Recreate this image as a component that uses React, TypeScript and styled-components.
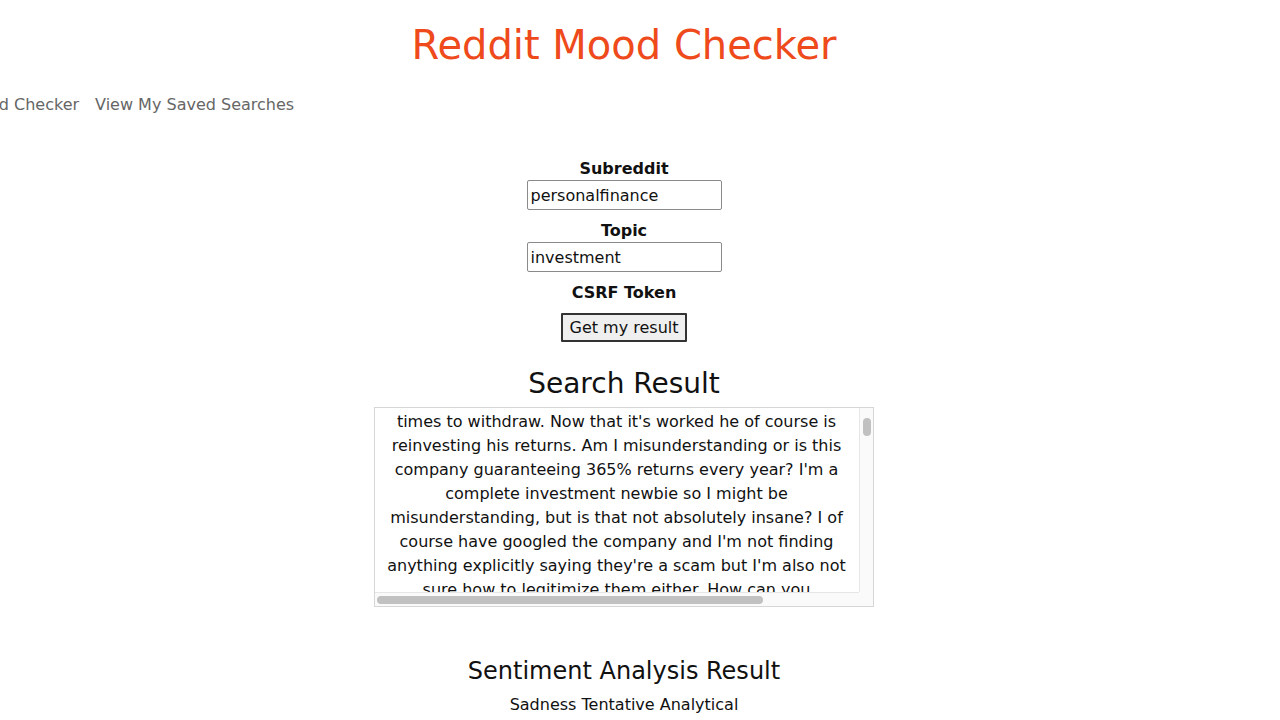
import styled, { createGlobalStyle } from "styled-components";

const GlobalStyle = createGlobalStyle`
  body {
    margin: 0;
    background: #fff;
    font-family: "DejaVu Sans", Verdana, sans-serif;
    color: #111;
    overflow: hidden;
  }
`;

const postText =
  "times to withdraw. Now that it's worked he of course is reinvesting his returns. Am I misunderstanding or is this company guaranteeing 365% returns every year? I'm a complete investment newbie so I might be misunderstanding, but is that not absolutely insane? I of course have googled the company and I'm not finding anything explicitly saying they're a scam but I'm also not sure how to legitimize them either. How can you realistically verify whether an investment platform is real? He keeps telling me to put money in too and the site looks fine but I'm not sure. Any advice would be appreciated, thanks in advance.";

export default function App() {
  return (
    <Page>
      <GlobalStyle />
      <Title>Reddit Mood Checker</Title>
      <Nav>
        <NavLink href="#">Reddit Mood Checker</NavLink>
        <NavLink href="#">View My Saved Searches</NavLink>
      </Nav>

      <Form onSubmit={(e) => e.preventDefault()}>
        <Label>Subreddit</Label>
        <Input defaultValue="personalfinance" />
        <Label $top={11}>Topic</Label>
        <Input defaultValue="investment" />
        <Label $top={11}>CSRF Token</Label>
        <Button type="submit">Get my result</Button>
      </Form>

      <SectionHeading $size={28} $top={25}>Search Result</SectionHeading>
      <ResultBox>
        <ResultViewport>
          <ResultText>{postText}</ResultText>
        </ResultViewport>
        <VTrack>
          <VThumb />
        </VTrack>
        <HTrack>
          <HThumb />
        </HTrack>
        <Corner />
      </ResultBox>

      <SectionHeading $size={24} $top={50}>Sentiment Analysis Result</SectionHeading>
      <Moods>Sadness Tentative Analytical</Moods>
    </Page>
  );
}

const Page = styled.div`
  display: flex;
  flex-direction: column;
  align-items: center;
  width: 1248px;
  height: 720px;
`;

const Title = styled.h1`
  margin: 21px 0 0;
  font-size: 40px;
  line-height: 48px;
  font-weight: normal;
  color: #ee4a1c;
`;

const Nav = styled.nav`
  align-self: flex-start;
  display: flex;
  gap: 16px;
  margin: 26px 0 0 -91px;
`;

const NavLink = styled.a`
  font-size: 16px;
  line-height: 20px;
  color: #666;
  text-decoration: none;
  white-space: nowrap;
`;

const Form = styled.form`
  display: flex;
  flex-direction: column;
  align-items: center;
  margin-top: 44px;
`;

const Label = styled.label<{ $top?: number }>`
  margin-top: ${(p) => p.$top ?? 0}px;
  margin-bottom: 1px;
  font-size: 16px;
  line-height: 20px;
  font-weight: bold;
`;

const Input = styled.input`
  box-sizing: border-box;
  width: 195px;
  height: 30px;
  padding: 0 3px;
  border: 1px solid #8a8a8a;
  border-radius: 2px;
  font-family: "DejaVu Sans", Verdana, sans-serif;
  font-size: 16px;
  color: #111;
  outline: none;
`;

const Button = styled.button`
  box-sizing: border-box;
  margin-top: 9px;
  width: 126px;
  height: 29px;
  padding: 0;
  border: 2px solid #333;
  border-radius: 1px;
  background: #efefef;
  font-family: "DejaVu Sans", Verdana, sans-serif;
  font-size: 16px;
  color: #111;
`;

const SectionHeading = styled.h2<{ $size: number; $top: number }>`
  margin: ${(p) => p.$top}px 0 0;
  font-size: ${(p) => p.$size}px;
  line-height: ${(p) => Math.round(p.$size * 1.22)}px;
  font-weight: normal;
  color: #111;
`;

const ResultBox = styled.div`
  box-sizing: border-box;
  margin-top: 6px;
  width: 500px;
  height: 200px;
  border: 1px solid #d6d6d6;
  display: grid;
  grid-template-columns: 1fr 14px;
  grid-template-rows: 1fr 14px;
  overflow: hidden;
`;

const ResultViewport = styled.div`
  overflow: hidden;
`;

const ResultText = styled.p`
  margin: 0;
  padding-top: 2px;
  width: 483px;
  font-size: 16px;
  line-height: 24px;
  text-align: center;
  color: #111;
`;

const VTrack = styled.div`
  display: flex;
  justify-content: center;
  padding-top: 10px;
  background: #fafafa;
  border-left: 1px solid #e6e6e6;
`;

const VThumb = styled.div`
  width: 8px;
  height: 18px;
  border-radius: 4px;
  background: #c1c1c1;
`;

const HTrack = styled.div`
  display: flex;
  align-items: center;
  padding-left: 2px;
  background: #fafafa;
  border-top: 1px solid #e6e6e6;
`;

const HThumb = styled.div`
  width: 386px;
  height: 8px;
  border-radius: 4px;
  background: #c1c1c1;
`;

const Corner = styled.div`
  background: #fafafa;
`;

const Moods = styled.p`
  margin: 9px 0 0;
  font-size: 16px;
  line-height: 20px;
`;
